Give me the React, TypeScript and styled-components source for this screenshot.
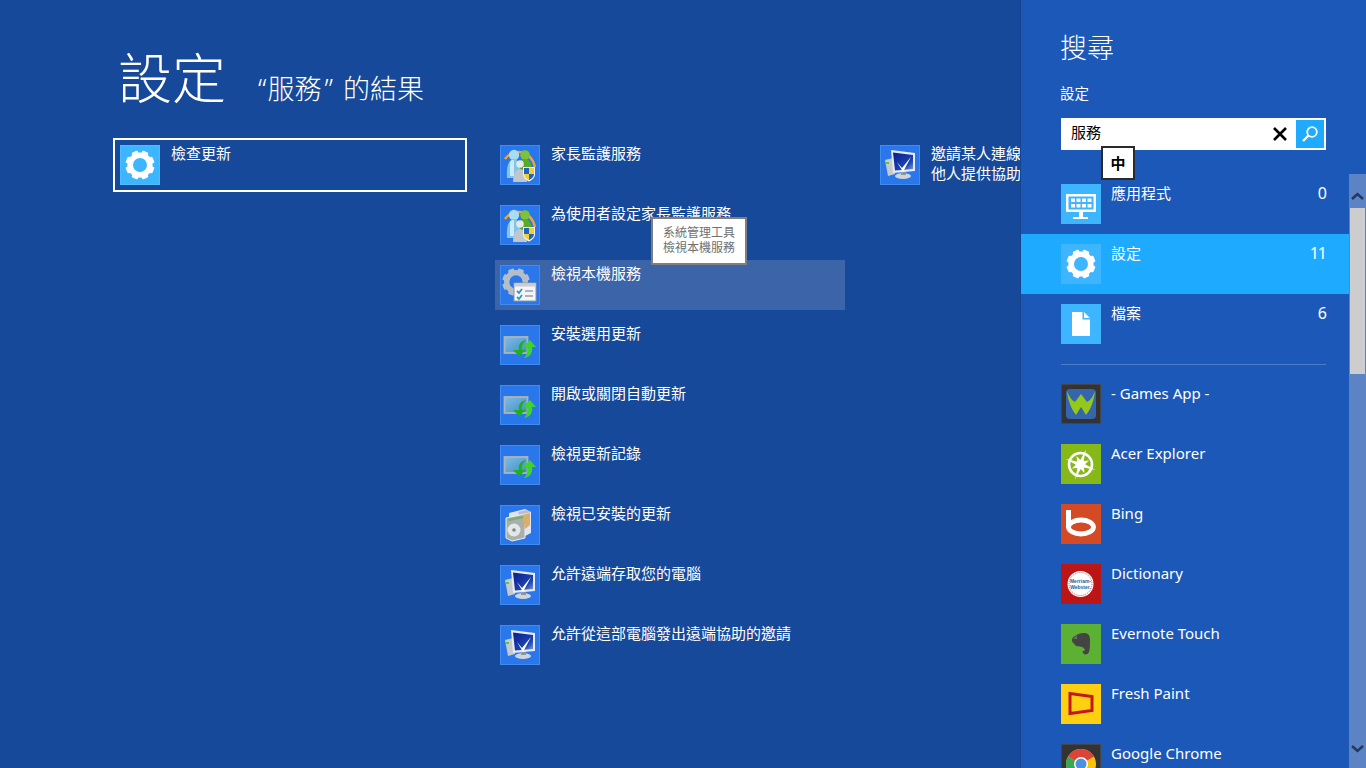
import React from 'react';
import styled, { createGlobalStyle } from 'styled-components';

const GlobalStyle = createGlobalStyle`
  html, body {
    margin: 0;
    padding: 0;
    overflow: hidden;
    background: #17499a;
  }
  * {
    box-sizing: border-box;
  }
`;

const Screen = styled.div`
  display: flex;
  width: 1366px;
  height: 768px;
  overflow: hidden;
  color: #fff;
  font-family: "Noto Sans", "Noto Sans CJK TC", sans-serif;
`;

const Main = styled.main`
  width: 1021px;
  flex: none;
  overflow: hidden;
  background: #17499a;
  border-right: 1px solid #15438e;
`;

const Header = styled.header`
  display: flex;
  align-items: baseline;
  gap: 32px;
  height: 140px;
  padding: 39px 0 0 118px;
`;

const Title = styled.h1`
  margin: 0;
  font-size: 54px;
  line-height: 78px;
  font-weight: 300;
`;

const Subtitle = styled.h2`
  margin: 0;
  font-size: 27px;
  line-height: 40px;
  font-weight: 300;
`;

const Quote = styled.span<{ $close?: boolean }>`
  margin: ${(p) => (p.$close ? '0 3px 0 3px' : '0 1px 0 0')};
`;

const Results = styled.div`
  display: flex;
  gap: 30px;
  padding-left: 115px;
`;

const Column = styled.div`
  display: flex;
  flex: none;
  flex-direction: column;
  gap: 10px;
  width: 350px;
`;

const Item = styled.div<{ $selected?: boolean; $hover?: boolean }>`
  position: relative;
  display: flex;
  gap: 11px;
  height: 50px;
  padding: 5px;
  background: ${(p) => (p.$hover ? '#3b64a9' : 'transparent')};
  outline: ${(p) => (p.$selected ? '2px solid #fff' : 'none')};
`;

const ItemText = styled.span`
  margin-top: -2px;
  font-size: 15px;
  line-height: 20px;
  white-space: nowrap;
`;

const Tile = styled.div<{ $color: string; $edge?: string }>`
  flex: none;
  width: 40px;
  height: 40px;
  background: ${(p) => p.$color};
  border: 1px solid ${(p) => p.$edge ?? p.$color};

  svg {
    display: block;
    width: 40px;
    height: 40px;
    margin: -1px;
  }
`;

const Tooltip = styled.div`
  position: absolute;
  z-index: 2;
  left: 156px;
  top: -43px;
  width: 96px;
  height: 48px;
  padding-top: 6px;
  background: #fff;
  border: 2px solid #7f7f7f;
  color: #707070;
  font-size: 12px;
  line-height: 15px;
  text-align: center;
`;

const Charm = styled.aside`
  display: flex;
  flex: none;
  flex-direction: column;
  width: 345px;
  height: 768px;
  overflow: hidden;
  background: #1b58b8;
`;

const CharmHead = styled.div`
  flex: none;
  height: 174px;
  padding: 30px 40px 0;
`;

const CharmTitle = styled.h2`
  margin: 0 0 0 -1px;
  font-size: 27px;
  line-height: 36px;
  font-weight: 300;
`;

const Scope = styled.div`
  margin: 17px 0 0 -1px;
  font-size: 14.5px;
  line-height: 20px;
`;

const SearchBox = styled.div`
  position: relative;
  display: flex;
  align-items: center;
  width: 265px;
  height: 32px;
  margin-top: 15px;
  padding: 2px 2px 2px 10px;
  background: #fff;
  color: #000;
  font-size: 15px;
  line-height: 20px;
`;

const Query = styled.span`
  flex: 1;
  margin-top: -4px;
`;

const ClearButton = styled.span`
  display: flex;
  width: 16px;
  margin-right: 8px;
`;

const SearchButton = styled.span`
  display: flex;
  align-items: center;
  justify-content: center;
  width: 28px;
  height: 28px;
  background: #1eaaff;
`;

const ImeBadge = styled.div`
  position: absolute;
  z-index: 2;
  left: 40px;
  top: 28px;
  display: flex;
  align-items: center;
  justify-content: center;
  width: 34px;
  height: 34px;
  background: #fff;
  border: 2px solid #2b2b2b;
  color: #000;
  font-size: 15px;
  font-weight: 700;
`;

const CharmBody = styled.div`
  display: flex;
  flex: 1;
  min-height: 0;
`;

const List = styled.div`
  flex: 1;
  min-width: 0;
  overflow: hidden;
`;

const Row = styled.div<{ $active?: boolean }>`
  display: flex;
  gap: 10px;
  height: 60px;
  padding: 10px 23px 0 40px;
  background: ${(p) => (p.$active ? '#1eaaff' : 'transparent')};
`;

const RowLabel = styled.span`
  flex: 1;
  margin-top: -1px;
  font-size: 15px;
  line-height: 20px;
  white-space: nowrap;
`;

const RowCount = styled.span`
  margin-top: -1px;
  font-size: 16px;
  line-height: 20px;
  letter-spacing: -1px;
`;

const Separator = styled.hr`
  height: 1px;
  margin: 10px 23px 9px 40px;
  border: 0;
  background: #4f7cc6;
`;

const Scrollbar = styled.div`
  display: flex;
  flex: none;
  flex-direction: column;
  width: 17px;
  background: #5c83c4;
`;

const ScrollArrow = styled.div<{ $down?: boolean }>`
  display: flex;
  flex: none;
  align-items: ${(p) => (p.$down ? 'flex-end' : 'center')};
  justify-content: center;
  height: 34px;
  padding-bottom: ${(p) => (p.$down ? '15px' : '0')};
  padding-top: ${(p) => (p.$down ? '0' : '10px')};
`;

const ScrollThumb = styled.div`
  flex: none;
  height: 166px;
  margin: 0 1px;
  background: #cdcdcd;
`;

const ScrollTrack = styled.div`
  flex: 1;
`;

const Gear = ({ cx = 20, cy = 20, scale = 1, color = '#fff' }: { cx?: number; cy?: number; scale?: number; color?: string }) => (
  <g transform={`translate(${cx} ${cy}) scale(${scale})`}>
    <circle r="9.800" fill="none" stroke={color} strokeWidth="5.600" />
    {Array.from({ length: 8 }, (_, i) => (
      <rect key={i} x="-3.300" y="-14.500" width="6.600" height="5" rx="1.200" fill={color} transform={`rotate(${i * 45 + 22.5})`} />
    ))}
  </g>
);

// compass star of the Acer tile: four long spikes, four short ones
const compassPoints = Array.from({ length: 16 }, (_, i) => {
  const radius = i % 2 === 1 ? 4.6 : i % 4 === 0 ? 16 : 9.5;
  const angle = ((i * 22.5 + 20) * Math.PI) / 180;
  return `${(19.5 + radius * Math.sin(angle)).toFixed(1)},${(20.5 - radius * Math.cos(angle)).toFixed(1)}`;
}).join(' ');

const icons: Record<string, React.ReactNode> = {
  gear: <Gear />,
  keys: (
    <g fill="#fff">
      <path d="M5 10h30v18H5zM7.500 12.500v13h25v-13z" fillRule="evenodd" />
      <path d="M10 14.500h4v3.500h-4zM15.500 14.500h4v3.500h-4zM21 14.500h4v3.500h-4zM26.500 14.500h4v3.500h-4zM10 20h4v3.500h-4zM15.500 20h4v3.500h-4zM21 20h4v3.500h-4zM26.500 20h4v3.500h-4z" />
      <path d="M18 28h4v5h5v2H12v-2h6z" />
    </g>
  ),
  file: <path d="M11 8h10.500v7.500H29V32H11zM23 8l6 6h-6z" fill="#fff" />,
  family: (
    <g>
      <path d="M5 14C12 4 30 3 35 22" fill="none" stroke="#eda72e" strokeWidth="2.500" />
      <circle cx="25" cy="10" r="4.800" fill="#7cc33a" />
      <path d="M18 26c0-9 3-12 7-12s7 3 7 12z" fill="#5aa92c" />
      <circle cx="14" cy="10" r="5.200" fill="#a8dcf5" />
      <path d="M7 33c-1-14 3-19 7-19s7 5 6 19z" fill="#80c4ea" />
      <path d="M10 17c1-2 3-2 4-2v16h-4z" fill="#c9ecfb" />
      <circle cx="20" cy="19" r="3.800" fill="#e6e9ec" />
      <path d="M13 37c0-8 3-13 7-13s7 5 7 13z" fill="#c0c6cc" />
      <path d="M23 22h12v7c0 4-3 6-6 7.500-3-1.500-6-3.500-6-7.500z" fill="#ecf0f4" />
      <path d="M24 23h5v6h-5zM29 29h5c0 3-2.500 5-5 6z" fill="#1f63c4" />
      <path d="M29 23h5v6h-5zM24 29h5v6c-2.500-1-5-3-5-6z" fill="#f6cf2c" />
    </g>
  ),
  services: (
    <g>
      <Gear cx={16} cy={17} scale={0.95} color="#b4bec8" />
      <rect x="14" y="18" width="22" height="18" fill="#f4f5f6" stroke="#8d96a0" />
      <rect x="14.500" y="18.500" width="21" height="3" fill="#c6cdd5" />
      <path d="M17 26l2 2 3-4M17 32l2 2 3-4" fill="none" stroke="#2a9bc4" strokeWidth="1.800" />
      <path d="M25 26h8M25 31h8" stroke="#6b7280" strokeWidth="1.200" />
    </g>
  ),
  update: (
    <g>
      <rect x="4.500" y="12" width="23" height="16" fill="url(#screen)" stroke="#b0b3b6" strokeWidth="1.800" />
      <path d="M26 15c-5 1-8 4-7 10h-6l6 6 7-6h-4c-1-4 1-7 4-10z" fill="#1fae1c" />
      <path d="M24 33c6-1 9-5 8-11h4l-6-7-7 7h4c1 4 0 8-3 11z" fill="#3ed42b" />
    </g>
  ),
  installed: (
    <g>
      <path d="M9 8l16-4 6 3v21l-14 7-8-3z" fill="#e2e3ee" />
      <path d="M18 7l8-2 5 2-12 3z" fill="#b8bcd8" />
      <path d="M6 13l19-4v24l-13 3-6-3z" fill="#a9b0a8" stroke="#eceef0" />
      <path d="M22 10l8-2v12l-5 4z" fill="#d8b06a" />
      <circle cx="14" cy="25" r="6.500" fill="#e4e7e9" />
      <circle cx="14" cy="25" r="1.800" fill="#7d8a80" />
      <path d="M8 15l15-3" stroke="#7eab78" strokeWidth="2.500" />
    </g>
  ),
  remote: (
    <g>
      <ellipse cx="23" cy="31" rx="8" ry="3" fill="#d0d5da" />
      <path d="M21 25h5v5h-5z" fill="#8b939b" />
      <path d="M5 15l8-2 2 16-7 2z" fill="#c5cad0" />
      <rect x="6" y="17" width="3" height="2" fill="#5fc63b" />
      <path d="M11 5l24 3v18l-22 2z" fill="#e7eaee" />
      <path d="M13 7.500l20 2.500v14l-18 1.500z" fill="url(#desk)" />
      <path d="M17 17l5 6 9-11-8 15z" fill="#fff" />
    </g>
  ),
  wacom: (
    <g>
      <rect x="5" y="5" width="30" height="30" rx="4" fill="#3565ad" />
      <path d="M6 7c1 9 4 18 9 24l5-8 5 8c5-6 8-15 9-24-2 5-4 9-8 11l-6-8-6 8C10 16 8 12 6 7z" fill="#93c91c" />
    </g>
  ),
  acer: (
    <g fill="#fff">
      <circle cx="19.500" cy="20.500" r="11.500" fill="none" stroke="#fff" strokeWidth="2.600" />
      <polygon points={compassPoints} />
    </g>
  ),
  bing: (
    <g fill="none" stroke="#fff">
      <path d="M7.500 6v18" strokeWidth="5" />
      <ellipse cx="20" cy="23" rx="12.500" ry="7" strokeWidth="4.800" />
    </g>
  ),
  dictionary: (
    <g>
      <circle cx="19.500" cy="20" r="13" fill="#fff" />
      <circle cx="19.500" cy="20" r="11.500" fill="none" stroke="#bc1515" strokeWidth="0.700" strokeDasharray="1 1" />
      <text x="19.500" y="19" fontSize="5" fontWeight="700" textAnchor="middle" fill="#2b5c96" fontFamily="Liberation Sans, sans-serif">Merriam-</text>
      <text x="19.500" y="25" fontSize="5" fontWeight="700" textAnchor="middle" fill="#2b5c96" fontFamily="Liberation Sans, sans-serif">Webster.</text>
    </g>
  ),
  evernote: (
    <g>
      <path d="M14 12c2-2 6-3 9-3 4 0 6 2 6 7 0 5 0 9-1 12-1 3-5 3-6 1-1-2 1-3 2-2 0-2-1-3-3-4-3-1-6 0-7-2-1-2-3-2-3-5 0-2 1-3 3-4z" fill="#444" />
      <path d="M16 11v4h-4z" fill="#6a6a6a" />
    </g>
  ),
  paint: <path d="M9 9.500l22 3v14l-22 3z" fill="none" stroke="#c3161c" strokeWidth="3" />,
  chrome: (
    <g>
      <circle cx="20" cy="20" r="15" fill="#f4c20d" />
      <path d="M20 20L7 12.500A15 15 0 0 1 33 12.500z" fill="#db4437" />
      <path d="M20 20L7 12.500A15 15 0 0 0 16 34.500z" fill="#3aa757" />
      <circle cx="20" cy="20" r="7" fill="#fff" />
      <circle cx="20" cy="20" r="5.500" fill="#4f8fe0" />
    </g>
  ),
};

const Icon = ({ name }: { name: string }) => (
  <svg viewBox="0 0 40 40">
    <defs>
      <linearGradient id="screen" x1="0" y1="0" x2="1" y2="1">
        <stop offset="0" stopColor="#7fbce4" />
        <stop offset="1" stopColor="#3f8fc9" />
      </linearGradient>
      <linearGradient id="desk" x1="0" y1="0" x2="1" y2="1">
        <stop offset="0" stopColor="#0b1f8a" />
        <stop offset="0.7" stopColor="#1c44b4" />
        <stop offset="1" stopColor="#7aa0ea" />
      </linearGradient>
    </defs>
    {icons[name]}
  </svg>
);

const Chevron = ({ down }: { down?: boolean }) => (
  <svg width="13" height="8" viewBox="0 0 13 8">
    <path d={down ? 'M1 1l5.500 5L12 1' : 'M1 7l5.500-5L12 7'} fill="none" stroke="#24365f" strokeWidth="2.400" />
  </svg>
);

const SETTINGS_BLUE = '#3db5ff';
const TILE_BLUE = '#2a77ec';
const TILE_EDGE = '#3f8bf2';

const column2 = [
  { icon: 'family', text: '家長監護服務' },
  { icon: 'family', text: '為使用者設定家長監護服務' },
  { icon: 'services', text: '檢視本機服務', hover: true },
  { icon: 'update', text: '安裝選用更新' },
  { icon: 'update', text: '開啟或關閉自動更新' },
  { icon: 'update', text: '檢視更新記錄' },
  { icon: 'installed', text: '檢視已安裝的更新' },
  { icon: 'remote', text: '允許遠端存取您的電腦' },
  { icon: 'remote', text: '允許從這部電腦發出遠端協助的邀請' },
];

const categories = [
  { icon: 'keys', label: '應用程式', count: 0 },
  { icon: 'gear', label: '設定', count: 11, active: true },
  { icon: 'file', label: '檔案', count: 6 },
];

const apps = [
  { icon: 'wacom', label: '- Games App -', color: '#333333', edge: '#454545' },
  { icon: 'acer', label: 'Acer Explorer', color: '#86b817' },
  { icon: 'bing', label: 'Bing', color: '#d34a25' },
  { icon: 'dictionary', label: 'Dictionary', color: '#bc1515' },
  { icon: 'evernote', label: 'Evernote Touch', color: '#5cb135' },
  { icon: 'paint', label: 'Fresh Paint', color: '#ffd012' },
  { icon: 'chrome', label: 'Google Chrome', color: '#333333', edge: '#454545' },
];

const App = () => (
  <Screen>
    <GlobalStyle />
    <Main>
      <Header>
        <Title>設定</Title>
        <Subtitle>
          <Quote>“</Quote>服務<Quote $close>”</Quote> 的結果
        </Subtitle>
      </Header>
      <Results>
        <Column>
          <Item $selected>
            <Tile $color={SETTINGS_BLUE} $edge="#4fbcff">
              <Icon name="gear" />
            </Tile>
            <ItemText>檢查更新</ItemText>
          </Item>
        </Column>
        <Column>
          {column2.map((item) => (
            <Item key={item.text} $hover={item.hover}>
              <Tile $color={TILE_BLUE} $edge={TILE_EDGE}>
                <Icon name={item.icon} />
              </Tile>
              <ItemText>{item.text}</ItemText>
              {item.hover && (
                <Tooltip>
                  系統管理工具
                  <br />
                  檢視本機服務
                </Tooltip>
              )}
            </Item>
          ))}
        </Column>
        <Column>
          <Item>
            <Tile $color={TILE_BLUE} $edge={TILE_EDGE}>
              <Icon name="remote" />
            </Tile>
            <ItemText>
              邀請某人連線到您的電腦並協助您，或為
              <br />
              他人提供協助
            </ItemText>
          </Item>
        </Column>
      </Results>
    </Main>
    <Charm>
      <CharmHead>
        <CharmTitle>搜尋</CharmTitle>
        <Scope>設定</Scope>
        <SearchBox>
          <Query>服務</Query>
          <ClearButton>
            <svg width="16" height="16" viewBox="0 0 16 16">
              <path d="M2 2l12 12M14 2L2 14" stroke="#000" strokeWidth="2.600" />
            </svg>
          </ClearButton>
          <SearchButton>
            <svg width="18" height="18" viewBox="0 0 18 18">
              <circle cx="11" cy="7" r="4.800" fill="none" stroke="#fff" strokeWidth="1.800" />
              <path d="M7.500 10.500L2 16" stroke="#fff" strokeWidth="2.400" />
            </svg>
          </SearchButton>
          <ImeBadge>中</ImeBadge>
        </SearchBox>
      </CharmHead>
      <CharmBody>
        <List>
          {categories.map((row) => (
            <Row key={row.label} $active={row.active}>
              <Tile $color={SETTINGS_BLUE}>
                <Icon name={row.icon} />
              </Tile>
              <RowLabel>{row.label}</RowLabel>
              <RowCount>{row.count}</RowCount>
            </Row>
          ))}
          <Separator />
          {apps.map((row) => (
            <Row key={row.label}>
              <Tile $color={row.color} $edge={row.edge}>
                <Icon name={row.icon} />
              </Tile>
              <RowLabel>{row.label}</RowLabel>
            </Row>
          ))}
        </List>
        <Scrollbar>
          <ScrollArrow>
            <Chevron />
          </ScrollArrow>
          <ScrollThumb />
          <ScrollTrack />
          <ScrollArrow $down>
            <Chevron down />
          </ScrollArrow>
        </Scrollbar>
      </CharmBody>
    </Charm>
  </Screen>
);

export default App;
